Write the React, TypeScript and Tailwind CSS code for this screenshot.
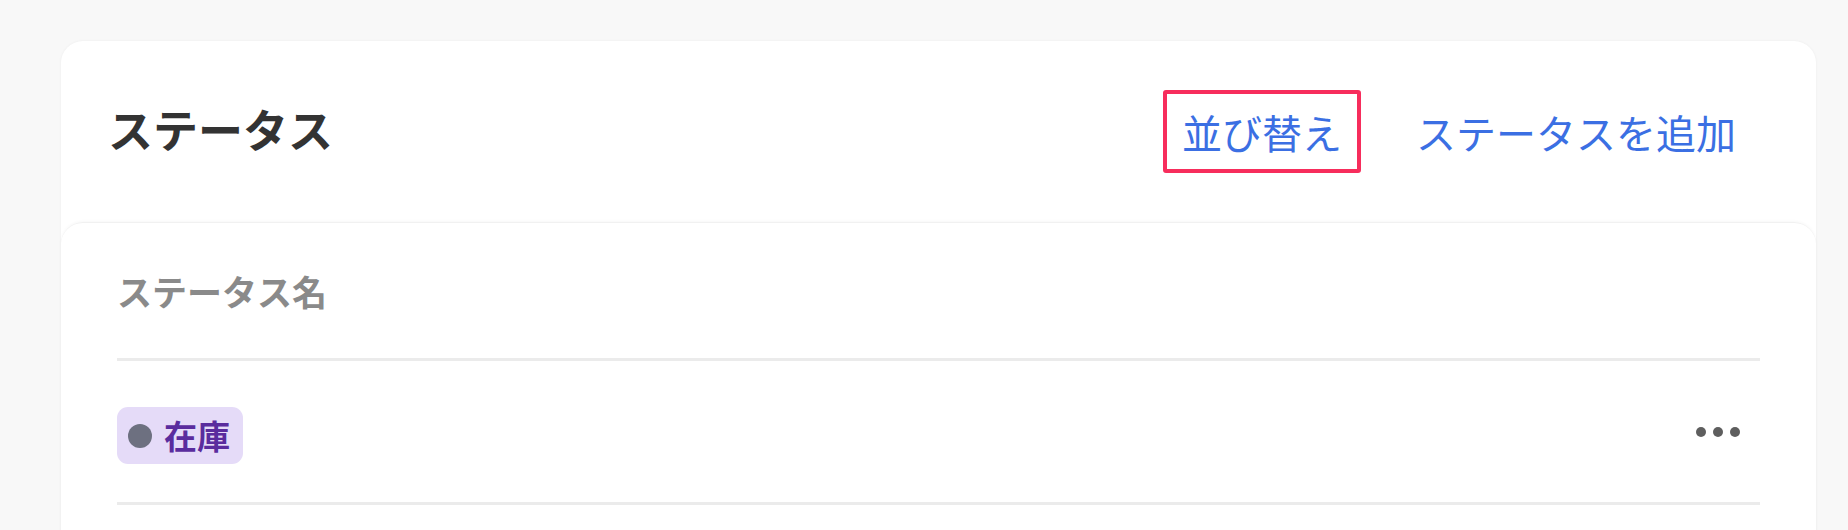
const font = { fontFamily: '"Noto Sans CJK JP", "Noto Sans", sans-serif' };

const statuses = [{ name: "在庫" }];

function MoreDots() {
  return (
    <button className="flex items-center gap-[7px] px-[4px]" aria-label="more">
      <span className="w-[10px] h-[10px] rounded-full bg-[#5e5e5e]" />
      <span className="w-[10px] h-[10px] rounded-full bg-[#5e5e5e]" />
      <span className="w-[10px] h-[10px] rounded-full bg-[#5e5e5e]" />
    </button>
  );
}

export default function App() {
  return (
    <div
      className="min-h-[530px] bg-[#f8f8f8] pt-[41px] pl-[61px] pr-[32px]"
      style={font}
    >
      <div className="bg-white rounded-t-[22px] shadow-[0_0_3px_rgba(0,0,0,0.05)]">
        {/* Header */}
        <div className="h-[181px] flex items-center justify-between pl-[47px] pr-[80px]">
          <h1 className="text-[45px] leading-none font-bold text-[#333333] mb-[6px]">
            ステータス
          </h1>
          <div className="flex items-center">
            <button className="border-4 border-[#f72d5c] rounded-[3px] h-[83px] px-[15px] text-[40px] leading-none text-[#3b6fe3]">
              並び替え
            </button>
            <button className="ml-[55px] text-[40px] leading-none text-[#3b6fe3]">
              ステータスを追加
            </button>
          </div>
        </div>

        {/* Table */}
        <div className="rounded-t-[22px] border-t border-[#f1f1f1] shadow-[0_-1px_3px_rgba(0,0,0,0.03)] px-[56px] pb-[40px]">
          <div className="h-[138px] flex items-center border-b-[3px] border-[#ebebeb]">
            <span className="text-[35px] leading-none font-bold text-[#8a8a8a]">
              ステータス名
            </span>
          </div>
          {statuses.map((s) => (
            <div
              key={s.name}
              className="h-[144px] flex items-center justify-between border-b-[3px] border-[#ebebeb]"
            >
              <span className="mt-[8px] inline-flex items-center gap-[12px] h-[57px] pl-[11px] pr-[13px] rounded-[11px] bg-[#e5dbf8]">
                <span className="w-[24px] h-[24px] rounded-full bg-[#6d7080]" />
                <span className="text-[33px] leading-none font-bold text-[#5a2c9e]">
                  {s.name}
                </span>
              </span>
              <div className="mr-[16px]">
                <MoreDots />
              </div>
            </div>
          ))}
        </div>
      </div>
    </div>
  );
}
